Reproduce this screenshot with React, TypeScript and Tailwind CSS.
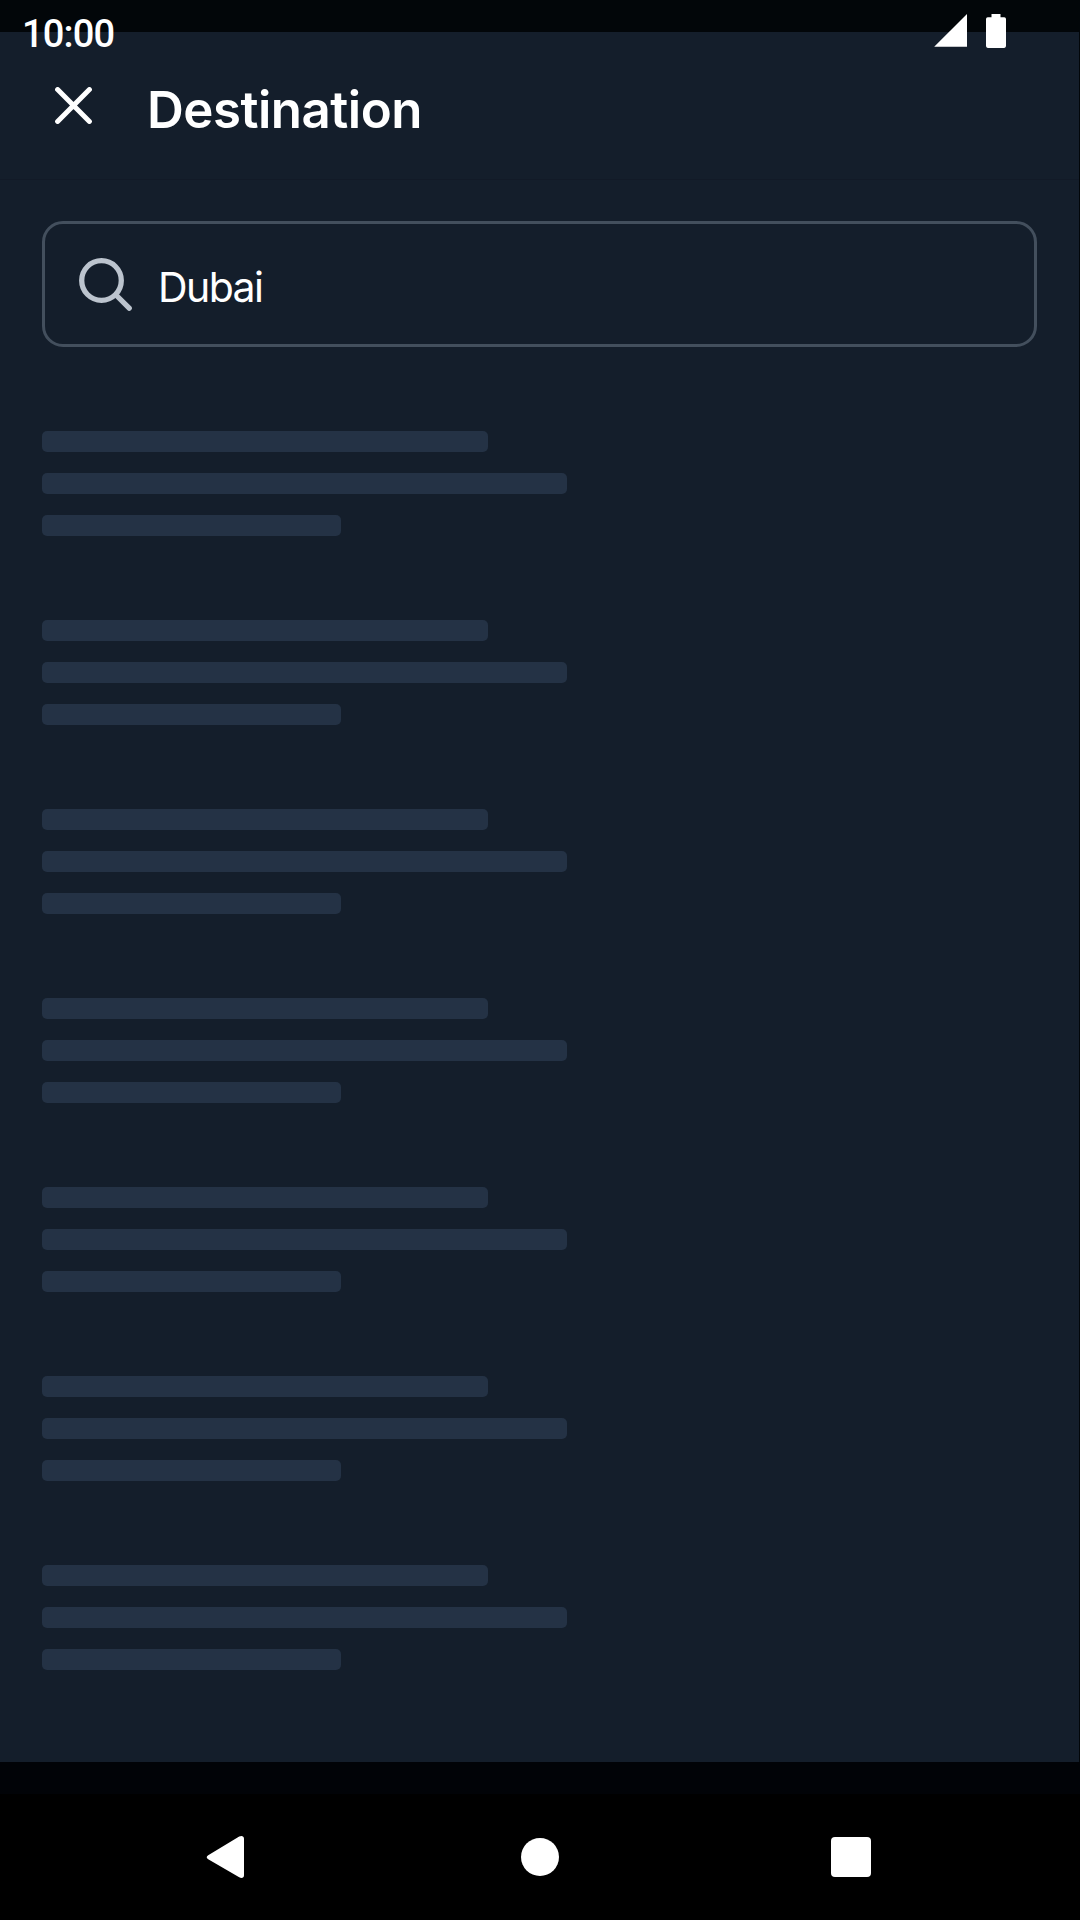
function StatusBar() {
  return (
    <div className="absolute inset-x-0 top-0 z-10 flex h-16 items-start pl-[22px] text-white">
      <span className="mt-3 font-['Roboto'] text-[38px] font-medium leading-[44px] tracking-[-0.8px]">10:00</span>
      <svg className="ml-auto mr-[74px] h-16 w-[72px]" viewBox="0 0 72 64" fill="currentColor" aria-hidden="true">
        <path d="M0.2 46.8 33 14V46.8Z" />
        <path d="M57.5 14h9v3.3h3.7a1.8 1.8 0 0 1 1.8 1.8v27a1.8 1.8 0 0 1-1.8 1.8H53.8a1.8 1.8 0 0 1-1.8-1.8v-27a1.8 1.8 0 0 1 1.8-1.8h3.7Z" />
      </svg>
    </div>
  );
}

function SkeletonItem() {
  return (
    <li className="flex flex-col gap-[21px]">
      <div className="h-[21px] w-[446px] rounded-[5px] bg-[#243245]" />
      <div className="h-[21px] w-[525px] rounded-[5px] bg-[#243245]" />
      <div className="h-[21px] w-[299px] rounded-[5px] bg-[#243245]" />
    </li>
  );
}

function NavigationBar() {
  return (
    <nav className="flex h-[126px] items-center bg-black pl-[206px] text-white">
      <button aria-label="Back">
        <svg className="block h-[43px] w-[39px]" viewBox="0 0 39 43" fill="currentColor">
          <path d="M2.2 19.2 33.2.6C35.7-.6 38 .2 38 2.700v36.500c0 2.700-2.300 3.400-4.800 2.100L2.200 23.200C.2 22 .2 20.400 2.200 19.200Z" />
        </svg>
      </button>
      <button aria-label="Home" className="ml-[276px] size-[37.500px] rounded-full bg-white" />
      <button aria-label="Recent apps" className="ml-[272.500px] size-10 rounded-[4px] bg-white" />
    </nav>
  );
}

export default function App() {
  return (
    <div className="relative flex h-[1920px] w-[1080px] flex-col overflow-hidden bg-[#020609] font-['Inter',sans-serif] text-white">
      <StatusBar />
      <main className="mr-px mt-8 h-[1730px] bg-[#141e2b]">
        <header className="flex h-[148px] items-start border-b border-[#121a27] pl-[55px]">
          <button aria-label="Close" className="mt-[55px]">
            <svg className="block size-[37px]" viewBox="0 0 37 37" fill="none" stroke="currentColor" strokeWidth="5" strokeLinecap="round">
              <path d="M2.600 2.600 34.400 34.400M34.400 2.600 2.600 34.400" />
            </svg>
          </button>
          <h1 className="ml-[55px] mt-[46px] text-[51px] font-semibold leading-[64px] tracking-[-0.500px]">Destination</h1>
        </header>
        <div className="ml-[42px] mr-[42px] mt-[41px] flex h-[126px] items-center rounded-[21px] border-[3px] border-[#434f5d] pl-[34px]">
          <svg className="size-[53px]" viewBox="0 0 53 53" fill="none" stroke="#bcc4ce" strokeWidth="5.300" strokeLinecap="round" aria-hidden="true">
            <circle cx="22.500" cy="22.500" r="19.800" />
            <path d="M37 37 50.200 50.200" />
          </svg>
          <span className="ml-[26px] mt-[6px] text-[41px] leading-[50px] tracking-[-1.600px]">Dubai</span>
        </div>
        <ul className="ml-[42px] mt-[84px] flex flex-col gap-[84px]" aria-busy="true">
          {Array.from({ length: 7 }, (_, i) => (
            <SkeletonItem key={i} />
          ))}
        </ul>
      </main>
      <div className="h-8 bg-[#010307]" />
      <NavigationBar />
    </div>
  );
}
